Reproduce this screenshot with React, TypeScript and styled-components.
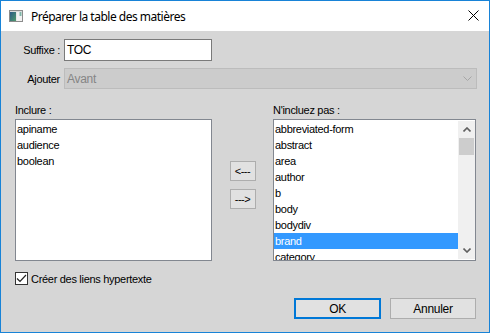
import React from "react";
import styled, { createGlobalStyle } from "styled-components";

const GlobalStyle = createGlobalStyle`
  html, body { margin: 0; padding: 0; background: #d6d6d6; }
  * { box-sizing: border-box; }
`;

const Window = styled.div`
  width: 490px;
  height: 333px;
  border: 1px solid #1883d7;
  background: #d6d6d6;
  display: flex;
  flex-direction: column;
  font-family: "Liberation Sans", Arial, sans-serif;
  font-size: 11px;
  letter-spacing: -0.3px;
  color: #000;
`;

const TitleBar = styled.div`
  height: 30px;
  background: #fff;
  display: flex;
  align-items: center;
  padding: 0 10px 0 8px;
`;

const Title = styled.span`
  margin-left: 8px;
  font-family: "Noto Sans", "Open Sans", sans-serif;
  font-size: 12px;
  letter-spacing: -0.5px;
  color: #000;
`;

const CloseIcon = styled.svg`
  margin-left: auto;
  margin-top: -2px;
`;

const Body = styled.div`
  flex: 1;
  display: flex;
  flex-direction: column;
  padding: 8px 12px 0 14px;
`;

const FieldRow = styled.div<{ $gap?: number }>`
  display: flex;
  align-items: center;
  gap: 4px;
  margin-top: ${(p) => p.$gap ?? 0}px;
`;

const FieldLabel = styled.span`
  width: 45px;
  text-align: right;
  white-space: nowrap;
`;

const TextInput = styled.div`
  width: 148px;
  height: 22px;
  border: 1px solid #7a7a7a;
  background: #fff;
  padding: 0 2px;
  display: flex;
  align-items: center;
  font-size: 12px;
`;

const Select = styled.div`
  flex: 1;
  height: 21px;
  background: #cccccc;
  border: 1px solid #bcbcbc;
  color: #858585;
  display: flex;
  align-items: center;
  padding: 0 4px 0 2px;
  font-size: 12px;
`;

const Chevron = styled.svg`
  margin-left: auto;
`;

const ListsGrid = styled.div`
  margin-top: 15px;
  display: grid;
  grid-template-columns: 197px 61px 203px;
  grid-template-rows: 13px 142px;
  row-gap: 2px;
`;

const ListLabel = styled.div<{ $col: number }>`
  grid-column: ${(p) => p.$col};
  grid-row: 1;
  line-height: 13px;
  white-space: nowrap;
`;

const ListBox = styled.div<{ $col: number }>`
  grid-column: ${(p) => p.$col};
  grid-row: 2;
  border: 1px solid #828790;
  background: #fff;
  overflow: hidden;
  display: flex;
  padding-top: 1px;
`;

const Items = styled.div`
  flex: 1;
  overflow: hidden;
`;

const Item = styled.div<{ $selected?: boolean }>`
  height: 16px;
  line-height: 16px;
  padding-left: 1px;
  white-space: nowrap;
  background: ${(p) => (p.$selected ? "#3399ff" : "transparent")};
  color: ${(p) => (p.$selected ? "#fff" : "#000")};
`;

const ScrollBar = styled.div`
  width: 17px;
  background: #f0f0f0;
  display: flex;
  flex-direction: column;
  margin-bottom: 1px;
`;

const ScrollArrow = styled.div`
  height: 17px;
  display: flex;
  align-items: center;
  justify-content: center;
`;

const ScrollThumb = styled.div`
  height: 17px;
  margin: 0 1px;
  background: #cdcdcd;
`;

const ScrollTrack = styled.div`
  flex: 1;
`;

const MoveColumn = styled.div`
  grid-column: 2;
  grid-row: 2;
  display: flex;
  flex-direction: column;
  align-items: center;
  gap: 8px;
  padding-top: 42px;
`;

const MoveButton = styled.div`
  width: 26px;
  height: 20px;
  background: #e1e1e1;
  border: 1px solid #adadad;
  display: flex;
  align-items: center;
  justify-content: center;
  letter-spacing: -0.5px;
`;

const CheckRow = styled.div`
  margin-top: 11px;
  display: flex;
  align-items: center;
  gap: 3px;
`;

const CheckBox = styled.div`
  width: 13px;
  height: 13px;
  border: 1px solid #333;
  background: #fff;
  display: flex;
  align-items: center;
  justify-content: center;
`;

const ButtonRow = styled.div`
  margin-top: 13px;
  margin-right: 1px;
  display: flex;
  justify-content: flex-end;
  gap: 9px;
`;

const DialogButton = styled.div<{ $default?: boolean; $w: number }>`
  width: ${(p) => p.$w}px;
  height: 21px;
  background: #e1e1e1;
  border: ${(p) => (p.$default ? "2px solid #0078d7" : "1px solid #adadad")};
  display: flex;
  align-items: center;
  justify-content: center;
  font-size: 12px;
`;

const included = ["apiname", "audience", "boolean"];
const excluded = [
  "abbreviated-form",
  "abstract",
  "area",
  "author",
  "b",
  "body",
  "bodydiv",
  "brand",
  "category",
];

export default function App() {
  return (
    <>
      <GlobalStyle />
      <Window>
        <TitleBar>
          <svg width="14" height="12" viewBox="0 0 14 12">
            <defs>
              <linearGradient id="ig" x1="0" y1="0" x2="1" y2="1">
                <stop offset="0" stopColor="#2d5a86" />
                <stop offset="1" stopColor="#4f9a6c" />
              </linearGradient>
            </defs>
            <rect x="0.5" y="0.5" width="13" height="11" fill="#dcdcdc" stroke="#8c8c8c" />
            <rect x="1" y="2" width="6" height="9" fill="url(#ig)" />
            <rect x="7.5" y="2" width="5.5" height="9" fill="#f2f2f2" />
            <rect x="10.5" y="2" width="2" height="4" fill="#7fb6a8" />
          </svg>
          <Title>Préparer la table des matières</Title>
          <CloseIcon width="11" height="11" viewBox="0 0 11 11">
            <path d="M0.5 0.5 L10.5 10.5 M10.5 0.5 L0.5 10.5" stroke="#000" strokeWidth="1" fill="none" />
          </CloseIcon>
        </TitleBar>
        <Body>
          <FieldRow>
            <FieldLabel>Suffixe :</FieldLabel>
            <TextInput>TOC</TextInput>
          </FieldRow>
          <FieldRow $gap={7}>
            <FieldLabel>Ajouter</FieldLabel>
            <Select>
              Avant
              <Chevron width="9" height="6" viewBox="0 0 9 6">
                <path d="M0.5 0.5 L4.5 4.5 L8.5 0.5" stroke="#a6a6a6" strokeWidth="1" fill="none" />
              </Chevron>
            </Select>
          </FieldRow>
          <ListsGrid>
            <ListLabel $col={1}>Inclure :</ListLabel>
            <ListLabel $col={3}>N'incluez pas :</ListLabel>
            <ListBox $col={1}>
              <Items>
                {included.map((t) => (
                  <Item key={t}>{t}</Item>
                ))}
              </Items>
            </ListBox>
            <MoveColumn>
              <MoveButton>&lt;---</MoveButton>
              <MoveButton>---&gt;</MoveButton>
            </MoveColumn>
            <ListBox $col={3}>
              <Items>
                {excluded.map((t) => (
                  <Item key={t} $selected={t === "brand"}>
                    {t}
                  </Item>
                ))}
              </Items>
              <ScrollBar>
                <ScrollArrow>
                  <svg width="8" height="5" viewBox="0 0 8 5">
                    <path d="M0.5 4.5 L4 1 L7.5 4.5" stroke="#606060" strokeWidth="1.6" fill="none" />
                  </svg>
                </ScrollArrow>
                <ScrollThumb />
                <ScrollTrack />
                <ScrollArrow>
                  <svg width="8" height="5" viewBox="0 0 8 5">
                    <path d="M0.5 0.5 L4 4 L7.5 0.5" stroke="#606060" strokeWidth="1.6" fill="none" />
                  </svg>
                </ScrollArrow>
              </ScrollBar>
            </ListBox>
          </ListsGrid>
          <CheckRow>
            <CheckBox>
              <svg width="11" height="9" viewBox="0 0 11 9">
                <path d="M1 4.5 L4 7.5 L10 1" stroke="#222" strokeWidth="1.2" fill="none" />
              </svg>
            </CheckBox>
            <span>Créer des liens hypertexte</span>
          </CheckRow>
          <ButtonRow>
            <DialogButton $default $w={87}>OK</DialogButton>
            <DialogButton $w={86}>Annuler</DialogButton>
          </ButtonRow>
        </Body>
      </Window>
    </>
  );
}
